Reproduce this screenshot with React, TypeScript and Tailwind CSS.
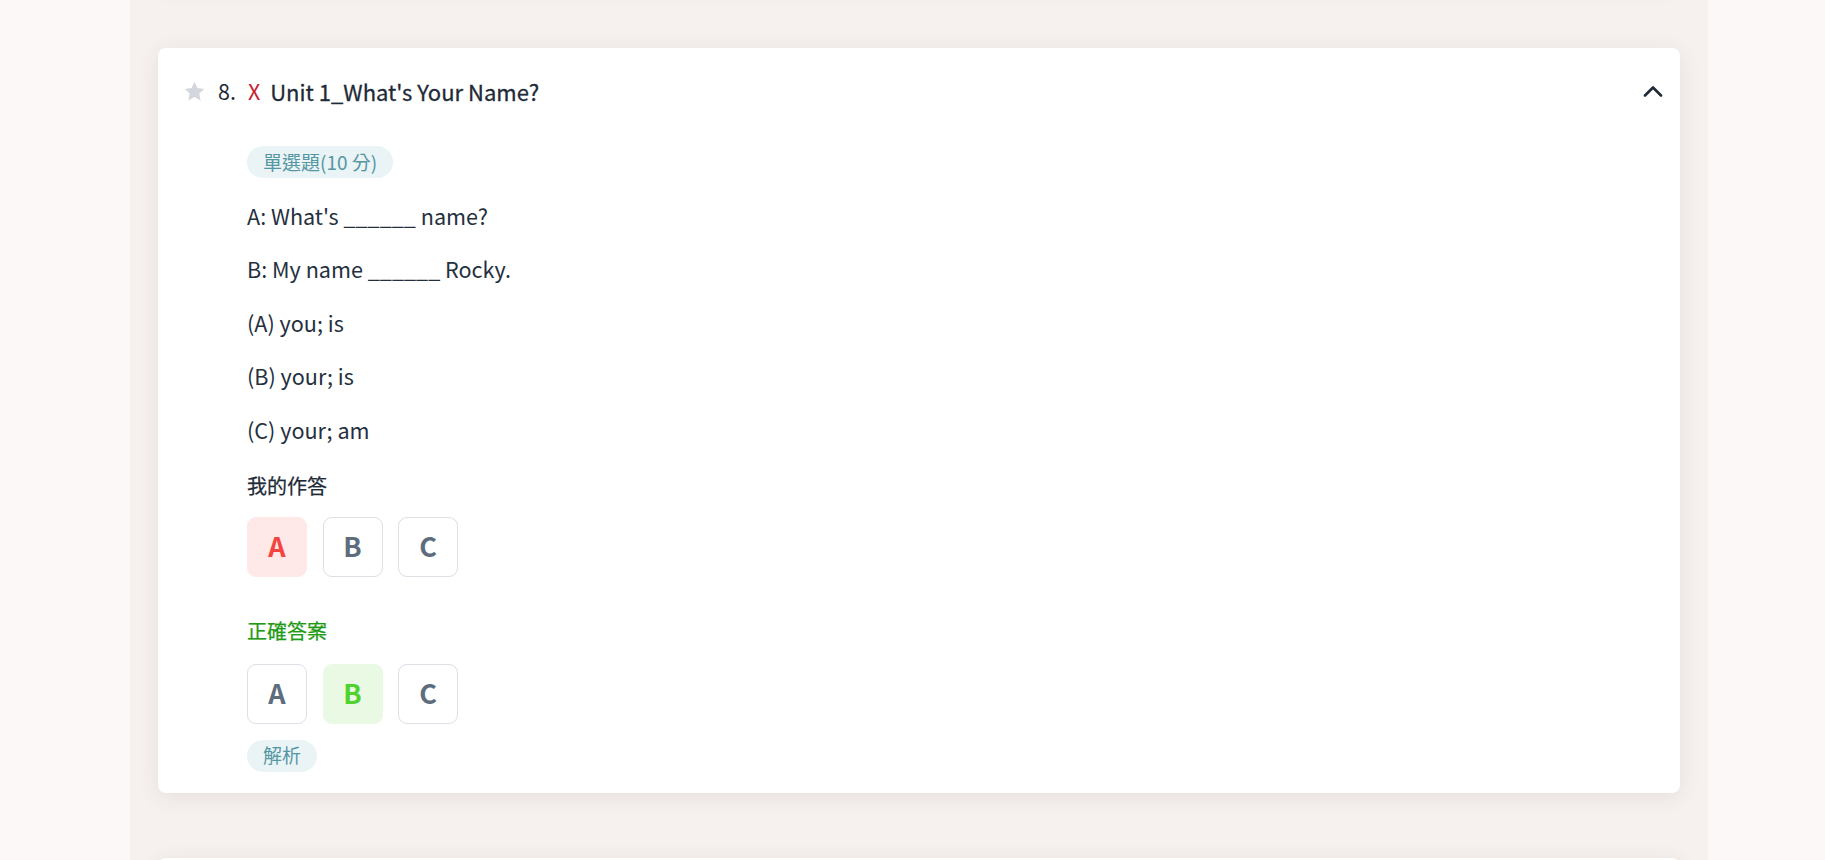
import React from "react";

const FONT = '"Noto Sans CJK TC", "Noto Sans", sans-serif';

function Star() {
  return (
    <svg width="23" height="23" viewBox="0 0 24 24" className="shrink-0">
      <path
        d="M12 1.8l3.1 6.6 7.1.9-5.2 4.9 1.4 7.1L12 17.8l-6.4 3.5 1.4-7.1L1.8 9.3l7.1-.9z"
        fill="#d3d6dc"
      />
    </svg>
  );
}

function ChevronUp() {
  return (
    <svg width="20" height="12" viewBox="0 0 20 12" className="shrink-0">
      <polyline
        points="2,10.5 10,2.5 18,10.5"
        fill="none"
        stroke="#1f2a37"
        strokeWidth="2.6"
        strokeLinecap="round"
        strokeLinejoin="round"
      />
    </svg>
  );
}

type Tone = "plain" | "wrong" | "right";

function Choice({ letter, tone }: { letter: string; tone: Tone }) {
  const cls =
    tone === "wrong"
      ? "bg-[#fee8e8] text-[#f4443d] border-[#fee8e8]"
      : tone === "right"
      ? "bg-[#eaf9e4] text-[#4fd22d] border-[#eaf9e4]"
      : "bg-white text-[#5d6d7e] border-[#dcdfe6]";
  return (
    <div
      className={`w-[60px] h-[60px] rounded-[9px] border flex items-center justify-center text-[27px] font-bold ${cls}`}
    >
      {letter}
    </div>
  );
}

function Pill({ children }: { children: React.ReactNode }) {
  return (
    <div className="inline-flex items-center h-[32px] px-[16px] rounded-full bg-[#eaf3f5] text-[#5497a3] text-[19px]">
      {children}
    </div>
  );
}

const lines = [
  "A: What's ______ name?",
  "B: My name ______ Rocky.",
  "(A) you; is",
  "(B) your; is",
  "(C) your; am",
];

export default function App() {
  return (
    <div
      className="w-full h-[860px] overflow-hidden bg-[#fbf8f7]"
      style={{ fontFamily: FONT }}
    >
      <div className="w-[1578px] h-full bg-[#f6f1ef] ml-[130px] px-[28px] flex flex-col gap-[65px]">
        {/* previous question, scrolled out of view */}
        <div className="bg-white rounded-[8px] shadow-[0_4px_22px_rgba(60,40,30,0.09)] h-[200px] -mt-[217px] shrink-0" />

        <div className="bg-white rounded-[8px] shadow-[0_4px_22px_rgba(60,40,30,0.09)] pt-[28px] pb-[21px] pl-[25px] pr-[17px] shrink-0">
          <div className="flex items-center h-[30px] text-[21.5px] text-[#1f2a37]">
            <Star />
            <span className="ml-[12px]">8.</span>
            <span className="ml-[12px] text-[#c8202f]">X</span>
            <span className="ml-[10px] text-[22px] [-webkit-text-stroke:0.3px_#1f2a37]">
              Unit 1_What's Your Name?
            </span>
            <div className="ml-auto">
              <ChevronUp />
            </div>
          </div>

          <div className="pl-[64px] flex flex-col items-start">
            <div className="mt-[40px]">
              <Pill>單選題(10 分)</Pill>
            </div>
            <div className="mt-[20.5px] flex flex-col gap-[19.5px] text-[21.6px] text-[#25303e]">
              {lines.map((l) => (
                <div key={l} className="h-[34px] leading-[34px] whitespace-pre">
                  {l}
                </div>
              ))}
            </div>

            <div className="mt-[24px] h-[30px] leading-[30px] text-[20px] text-[#1f2a37] [-webkit-text-stroke:0.25px_#1f2a37]">
              我的作答
            </div>
            <div className="mt-[16px] flex gap-[15.5px]">
              <Choice letter="A" tone="wrong" />
              <Choice letter="B" tone="plain" />
              <Choice letter="C" tone="plain" />
            </div>

            <div className="mt-[39.5px] h-[30px] leading-[30px] text-[20px] text-[#1f9a14] [-webkit-text-stroke:0.25px_#1f9a14]">
              正確答案
            </div>
            <div className="mt-[17.5px] flex gap-[15.5px]">
              <Choice letter="A" tone="plain" />
              <Choice letter="B" tone="right" />
              <Choice letter="C" tone="plain" />
            </div>

            <div className="mt-[16px]">
              <Pill>解析</Pill>
            </div>
          </div>
        </div>

        {/* next question */}
        <div className="bg-white rounded-[8px] shadow-[0_4px_22px_rgba(60,40,30,0.09)] h-[300px] shrink-0" />
      </div>
    </div>
  );
}
